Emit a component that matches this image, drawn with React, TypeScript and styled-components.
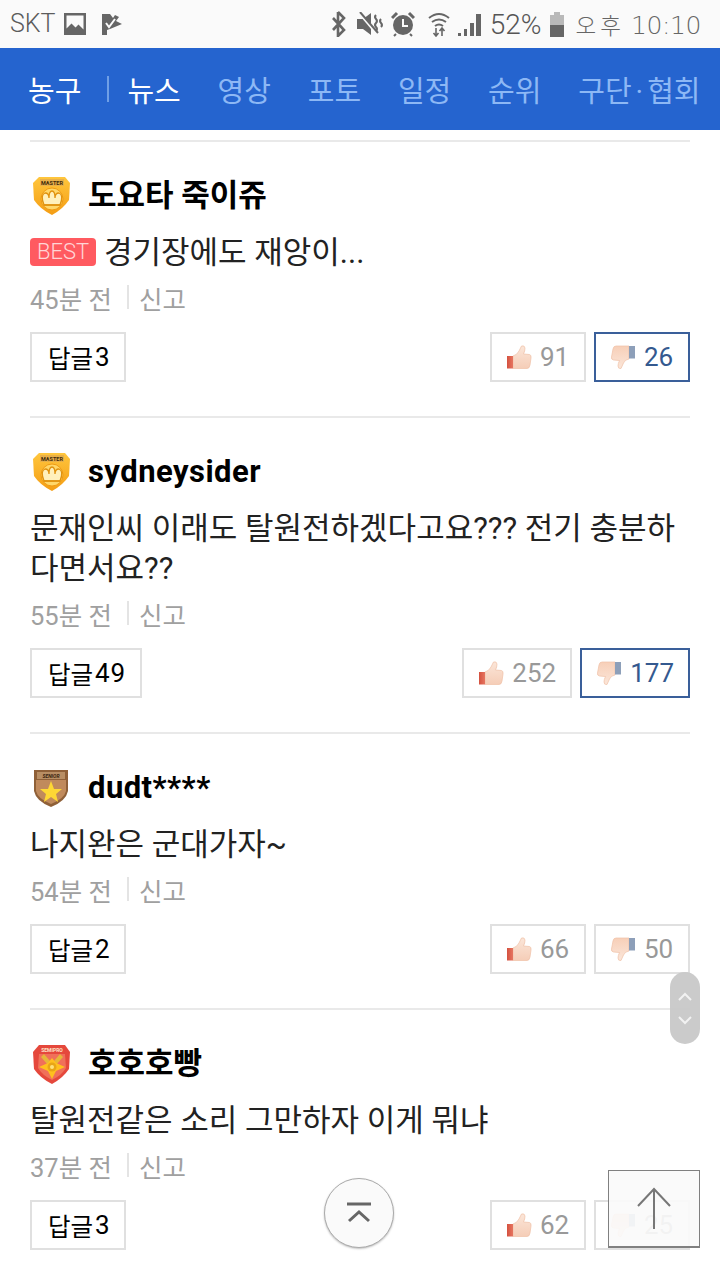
import React from "react";
import styled, { createGlobalStyle } from "styled-components";

const Global = createGlobalStyle`
  html, body { margin: 0; padding: 0; background: #fff; }
  * { box-sizing: border-box; }
`;

const KR = `Roboto, "Noto Sans CJK KR", sans-serif`;

const Page = styled.div`
  position: relative;
  width: 720px;
  height: 1280px;
  overflow: hidden;
  background: #fff;
  font-family: ${KR};
`;

const StatusBar = styled.div`
  height: 48px;
  background: #fafafa;
  display: flex;
  align-items: center;
  justify-content: space-between;
  padding: 0 19px 0 10px;
  color: #666;
`;
const StatusGroup = styled.div`
  display: flex;
  align-items: center;
`;
const Carrier = styled.span`
  font-size: 25px;
  line-height: 48px;
  font-family: Roboto, sans-serif;
  font-weight: 300;
  color: #5c5c5c;
  margin-right: 7px;
`;
const Percent = styled.span`
  font-size: 28px;
  font-family: Roboto, sans-serif;
  font-weight: 300;
  color: #555;
  margin: 0 7px 0 8px;
`;
const Clock = styled.span`
  font-size: 25px;
  font-family: "DejaVu Sans", "Noto Sans CJK KR", sans-serif;
  font-weight: 300;
  letter-spacing: -0.4px;
  color: #666;
  margin-left: 11px;
  white-space: nowrap;
`;
const ClockLabel = styled.span`
  font-family: "Noto Sans CJK KR", sans-serif;
  font-size: 22.5px;
  letter-spacing: 4px;
  margin-right: 6px;
`;
const StatusIcon = styled.svg<{ $ml?: number }>`
  display: block;
  margin-left: ${(p) => p.$ml ?? 0}px;
  fill: #666;
`;

const Nav = styled.nav`
  height: 82px;
  background: #2564cf;
  display: flex;
  align-items: center;
  padding-left: 28px;
  white-space: nowrap;
`;
const Section = styled.span`
  font-size: 29px;
  color: #fff;
  flex: none;
`;
const NavDivider = styled.span`
  flex: none;
  width: 2px;
  height: 26px;
  background: #6f9fe6;
  margin: 0 18px 0 26px;
`;
const Tab = styled.span<{ $active?: boolean }>`
  font-size: 29px;
  color: ${(p) => (p.$active ? "#fff" : "#8db8f5")};
  margin-right: 36.8px;
  flex: none;
`;
const TabDot = styled.span`
  margin: 0 4px;
`;

const List = styled.div`
  padding: 10px 30px 0;
`;
const Comment = styled.article`
  border-top: 2px solid #e9e9e9;
  padding: 32px 0 34px;
`;
const Head = styled.div`
  display: flex;
  align-items: center;
  height: 44px;
  gap: 16px;
`;
const BadgeSvg = styled.svg`
  display: block;
  width: 42px;
  height: 42px;
  flex: none;
`;
const Name = styled.span<{ $latin?: boolean }>`
  font-size: 31px;
  font-weight: 700;
  color: #000;
  line-height: 44px;
  letter-spacing: ${(p) => (p.$latin ? "0.45px" : "0")};
`;
const Body = styled.p`
  margin: 15px 0 0;
  font-size: 31px;
  line-height: 40px;
  color: #222;
`;
const Best = styled.span`
  display: inline-block;
  width: 66px;
  height: 28px;
  line-height: 28px;
  border-radius: 4px;
  background: #ff5a60;
  color: #ffd5d6;
  font-size: 22px;
  text-align: center;
  font-family: Roboto, sans-serif;
  font-weight: 300;
  margin-right: 8px;
  vertical-align: 4px;
`;
const Meta = styled.div`
  display: flex;
  align-items: center;
  margin-top: 8px;
  height: 32px;
  font-size: 25.5px;
  color: #a0a0a0;
`;
const MetaBar = styled.span`
  width: 2px;
  height: 24px;
  background: #e4e4e4;
  margin: 0 10px 0 15px;
`;
const Actions = styled.div`
  display: flex;
  align-items: center;
  justify-content: space-between;
  margin-top: 19px;
`;
const Votes = styled.div`
  display: flex;
  gap: 8px;
`;
const Reply = styled.button`
  height: 50px;
  padding: 0 14px 0 16px;
  border: 2px solid #e0e0e0;
  border-radius: 0;
  background: #fff;
  color: #000;
  font: 400 24.5px ${KR};
  display: flex;
  align-items: center;
`;
const ReplyCount = styled.span`
  font-size: 26px;
  margin-left: 2px;
  letter-spacing: 0.7px;
`;
const VoteBtn = styled.button<{ $on?: boolean }>`
  height: 50px;
  padding: 0 14px;
  min-width: 96px;
  border: 2px solid ${(p) => (p.$on ? "#3a5f9a" : "#e0e0e0")};
  border-radius: 0;
  background: #fff;
  color: ${(p) => (p.$on ? "#34598f" : "#999")};
  font: 400 26px Roboto, sans-serif;
  display: flex;
  align-items: center;
  gap: 8px;
`;
const ThumbSvg = styled.svg`
  display: block;
  width: 26px;
  height: 26px;
  flex: none;
`;

const Pill = styled.div`
  position: absolute;
  left: 670px;
  top: 972px;
  width: 30px;
  height: 72px;
  border-radius: 15px;
  background: rgba(200, 200, 200, 0.95);
  display: flex;
  flex-direction: column;
  align-items: center;
  justify-content: center;
  gap: 13px;
`;
const TopCircle = styled.button`
  position: absolute;
  left: 324px;
  top: 1178px;
  width: 70px;
  height: 70px;
  padding: 0;
  border-radius: 50%;
  border: 1px solid #aaa;
  background: #fafafa;
  box-shadow: 0 1px 2px rgba(0, 0, 0, 0.25);
  display: flex;
  align-items: center;
  justify-content: center;
`;
const TopBox = styled.button`
  position: absolute;
  left: 608px;
  top: 1170px;
  width: 92px;
  height: 78px;
  padding: 0;
  border: 1px solid #808080;
  border-bottom-width: 2px;
  background: rgba(250, 250, 250, 0.92);
  display: flex;
  align-items: center;
  justify-content: center;
`;

const Master = () => (
  <BadgeSvg viewBox="0 0 42 42">
    <defs>
      <linearGradient id="mg" x1="0" y1="0" x2="0" y2="1">
        <stop offset="0" stopColor="#ffc63d" />
        <stop offset="1" stopColor="#f49d14" />
      </linearGradient>
    </defs>
    <path d="M9 2 L35 2 L40 8 L39 25 Q33 34 22 40 Q10 34 4 25 L3 8 Z" fill="url(#mg)" />
    <rect x="10" y="4" width="24" height="7" fill="#e8b04a" />
    <text x="22" y="9.500" fontSize="5.500" fontWeight="700" textAnchor="middle" fill="#40290a" fontFamily="Roboto, sans-serif">MASTER</text>
    <circle cx="22" cy="24" r="11" fill="#ffd76a" stroke="#ef9a12" strokeWidth="1" />
    <path d="M14 30 Q10 20 15 18 Q19 18 19 23 Q19 16 22 16 Q25 16 25 23 Q25 18 29 18 Q34 20 30 30 Z" fill="#fff0bc" stroke="#e0920f" strokeWidth="1.300" />
    <path d="M14 30h16" stroke="#e0920f" strokeWidth="1.500" />
  </BadgeSvg>
);
const Senior = () => (
  <BadgeSvg viewBox="0 0 42 42">
    <path d="M4 3 L38 3 L38 24 Q36 34 21 40 Q6 34 4 24 Z" fill="#8f6038" />
    <path d="M6 13 L36 13 L36 24 Q34 32 21 37 Q8 32 6 24 Z" fill="#c08a5c" />
    <rect x="7" y="5" width="28" height="7" fill="#b88e64" />
    <text x="21" y="10.500" fontSize="5" fontWeight="700" fontStyle="italic" textAnchor="middle" fill="#3a2410" fontFamily="Roboto, sans-serif">SENIOR</text>
    <path d="M21 14 L24 22 L32 22 L26 27 L28 35 L21 30 L14 35 L16 27 L10 22 L18 22 Z" fill="#fdd835" />
  </BadgeSvg>
);
const Semipro = () => (
  <BadgeSvg viewBox="0 0 42 42">
    <path d="M9 2 L35 2 L40 9 L39 26 Q33 35 22 41 Q10 35 4 26 L3 9 Z" fill="#e5483c" />
    <path d="M9 11 L35 11 L36 25 Q32 32 22 37 Q12 32 8 25 Z" fill="#f0705a" />
    <text x="22" y="8.500" fontSize="5" fontWeight="700" textAnchor="middle" fill="#ffe3c8" fontFamily="Roboto, sans-serif">SEMIPRO</text>
    <path d="M14 11 L20 18 L24 18 L30 11 L33 14 L26 22 L18 22 L11 14 Z" fill="#e6b63a" />
    <path d="M22 15 L26 20 L35 24 L26 28 L22 36 L18 28 L9 24 L18 20 Z" fill="#ffc01e" />
    <circle cx="22" cy="24" r="4.500" fill="#e8a616" />
    <circle cx="22" cy="24" r="2" fill="#ffe27a" />
  </BadgeSvg>
);
const badges = { master: Master, senior: Senior, semipro: Semipro };

const ThumbUp = () => (
  <ThumbSvg viewBox="0 0 26 26">
    <defs>
      <linearGradient id="tu" x1="0" y1="0" x2="0" y2="1">
        <stop offset="0" stopColor="#fbe6d9" />
        <stop offset="1" stopColor="#f5cdb7" />
      </linearGradient>
      <linearGradient id="tc" x1="0" y1="0" x2="1" y2="0">
        <stop offset="0" stopColor="#d4513f" />
        <stop offset="1" stopColor="#e67560" />
      </linearGradient>
    </defs>
    <path d="M7 12 Q11 11 13 7 L15.500 2 Q18.500 1 19 4 Q19 7 17.500 10 L23.500 10.500 Q25.500 11 25 14 L24 21 Q23.500 24.500 21 24.500 L7 24.500 Z" fill="url(#tu)" stroke="#efc0a6" strokeWidth=".7" />
    <rect x="1" y="12" width="6" height="12.500" fill="url(#tc)" />
  </ThumbSvg>
);
const ThumbDown = () => (
  <ThumbSvg viewBox="0 0 26 26">
    <defs>
      <linearGradient id="td" x1="0" y1="0" x2="0" y2="1">
        <stop offset="0" stopColor="#f7cfb8" />
        <stop offset="1" stopColor="#fbe6d9" />
      </linearGradient>
    </defs>
    <path d="M19 15 Q15 15.500 13.500 19 L11 24.500 Q8 25 8 22 Q8 19.500 9.500 16.500 L3.500 16 Q1 15.500 1.500 13 L3 5 Q3.500 2 6 2 L19 2 Z" fill="url(#td)" stroke="#efc0a6" strokeWidth=".7" />
    <rect x="19" y="2" width="6" height="12.500" fill="#8d9fb9" />
  </ThumbSvg>
);

type Item = {
  badge: keyof typeof badges;
  name: string;
  latin?: boolean;
  best?: boolean;
  text: React.ReactNode;
  time: string;
  replies: number;
  up: number;
  down: number;
  on?: boolean;
};

const items: Item[] = [
  { badge: "master", name: "도요타 죽이쥬", best: true, text: "경기장에도 재앙이...", time: "45분 전", replies: 3, up: 91, down: 26, on: true },
  { badge: "master", name: "sydneysider", latin: true, text: "문재인씨 이래도 탈원전하겠다고요??? 전기 충분하다면서요??", time: "55분 전", replies: 49, up: 252, down: 177, on: true },
  { badge: "senior", name: "dudt****", latin: true, text: "나지완은 군대가자~", time: "54분 전", replies: 2, up: 66, down: 50 },
  { badge: "semipro", name: "호호호빵", text: "탈원전같은 소리 그만하자 이게 뭐냐", time: "37분 전", replies: 3, up: 62, down: 25 },
];

export default function App() {
  return (
    <Page>
      <Global />
      <StatusBar>
        <StatusGroup>
          <Carrier>SKT</Carrier>
          <StatusIcon width="24" height="24" viewBox="0 0 24 24">
            <path d="M1 1h22v22H1z M3.500 3.500v13l5-5 4 4 3-3 5 5v-14z" fillRule="evenodd" />
          </StatusIcon>
          <StatusIcon $ml={14} width="22" height="24" viewBox="0 0 22 24">
            <path d="M1 2h8l3 4 2-3 4 2-3 4 6 3-12 5-3 1v5H1z" />
            <path d="M5 11l3 4 6-8" fill="none" stroke="#fafafa" strokeWidth="2" />
          </StatusIcon>
        </StatusGroup>
        <StatusGroup>
          <StatusIcon width="16" height="26" viewBox="0 0 16 26">
            <path d="M8 1v24l6-6-11-12M8 1l6 6-11 12" fill="none" stroke="#666" strokeWidth="2.600" />
          </StatusIcon>
          <StatusIcon $ml={11} width="26" height="24" viewBox="0 0 26 24">
            <path d="M0 7h6l8-6v22l-8-6H0z" />
            <path d="M3 2l16 19" stroke="#fafafa" strokeWidth="2.500" />
            <path d="M3 0l18 21" stroke="#666" strokeWidth="2" />
            <path d="M19 3q-2 2 0 4t0 4 0 4 0 4M24 7q-2 2 0 4t0 4" fill="none" stroke="#666" strokeWidth="2" />
          </StatusIcon>
          <StatusIcon $ml={8} width="24" height="26" viewBox="0 0 24 26">
            <circle cx="12" cy="14" r="10" />
            <path d="M12 8v7h5" fill="none" stroke="#fafafa" strokeWidth="2" />
            <path d="M1 7l5-5M23 7l-5-5" stroke="#666" strokeWidth="3" />
            <path d="M5 23l-2 2M19 23l2 2" stroke="#666" strokeWidth="2" />
          </StatusIcon>
          <StatusIcon $ml={13} width="22" height="26" viewBox="0 0 22 26">
            <path d="M1 7q10-8 20 0M4 11q7-5 14 0M7 15q4-3 8 0" fill="none" stroke="#666" strokeWidth="2" />
            <path d="M8 17v8M5.500 22l2.500 3 2.500-3M14 25v-8M11.500 20l2.500-3 2.500 3" fill="none" stroke="#666" strokeWidth="1.600" />
          </StatusIcon>
          <StatusIcon $ml={8} width="24" height="24" viewBox="0 0 24 24">
            <path d="M0 21h3v3H0zM6 17h3v7H6zM12 11h4v13h-4zM18 2h5v22h-5z" />
          </StatusIcon>
          <Percent>52%</Percent>
          <StatusIcon width="16" height="26" viewBox="0 0 16 26">
            <path d="M5 1h6v3h4v22H1V4h4z" fill="#b9b9b9" />
            <path d="M1 14h14v12H1z" fill="#666" />
          </StatusIcon>
          <Clock>
            <ClockLabel>오후</ClockLabel>10:10
          </Clock>
        </StatusGroup>
      </StatusBar>
      <Nav>
        <Section>농구</Section>
        <NavDivider />
        <Tab $active>뉴스</Tab>
        <Tab>영상</Tab>
        <Tab>포토</Tab>
        <Tab>일정</Tab>
        <Tab>순위</Tab>
        <Tab>
          구단<TabDot>·</TabDot>협회
        </Tab>
      </Nav>
      <List>
        {items.map((it) => {
          const Badge = badges[it.badge];
          return (
            <Comment key={it.name}>
              <Head>
                <Badge />
                <Name $latin={it.latin}>{it.name}</Name>
              </Head>
              <Body>
                {it.best && <Best>BEST</Best>}
                {it.text}
              </Body>
              <Meta>
                {it.time}
                <MetaBar />
                신고
              </Meta>
              <Actions>
                <Reply>
                  답글<ReplyCount>{it.replies}</ReplyCount>
                </Reply>
                <Votes>
                  <VoteBtn>
                    <ThumbUp />
                    {it.up}
                  </VoteBtn>
                  <VoteBtn $on={it.on}>
                    <ThumbDown />
                    {it.down}
                  </VoteBtn>
                </Votes>
              </Actions>
            </Comment>
          );
        })}
      </List>
      <Pill>
        <svg width="16" height="10" viewBox="0 0 16 10"><path d="M2 8l6-6 6 6" fill="none" stroke="#f2f2f2" strokeWidth="2" /></svg>
        <svg width="16" height="10" viewBox="0 0 16 10"><path d="M2 2l6 6 6-6" fill="none" stroke="#f2f2f2" strokeWidth="2" /></svg>
      </Pill>
      <TopCircle aria-label="맨 위로">
        <svg width="26" height="22" viewBox="0 0 26 22"><path d="M1 2h24" stroke="#666" strokeWidth="3" /><path d="M3 19l10-9 10 9" fill="none" stroke="#666" strokeWidth="3" /></svg>
      </TopCircle>
      <TopBox aria-label="위로">
        <svg width="36" height="44" viewBox="0 0 36 44"><path d="M18 2v40M2 19L18 2l16 17" fill="none" stroke="#777" strokeWidth="2" /></svg>
      </TopBox>
    </Page>
  );
}
